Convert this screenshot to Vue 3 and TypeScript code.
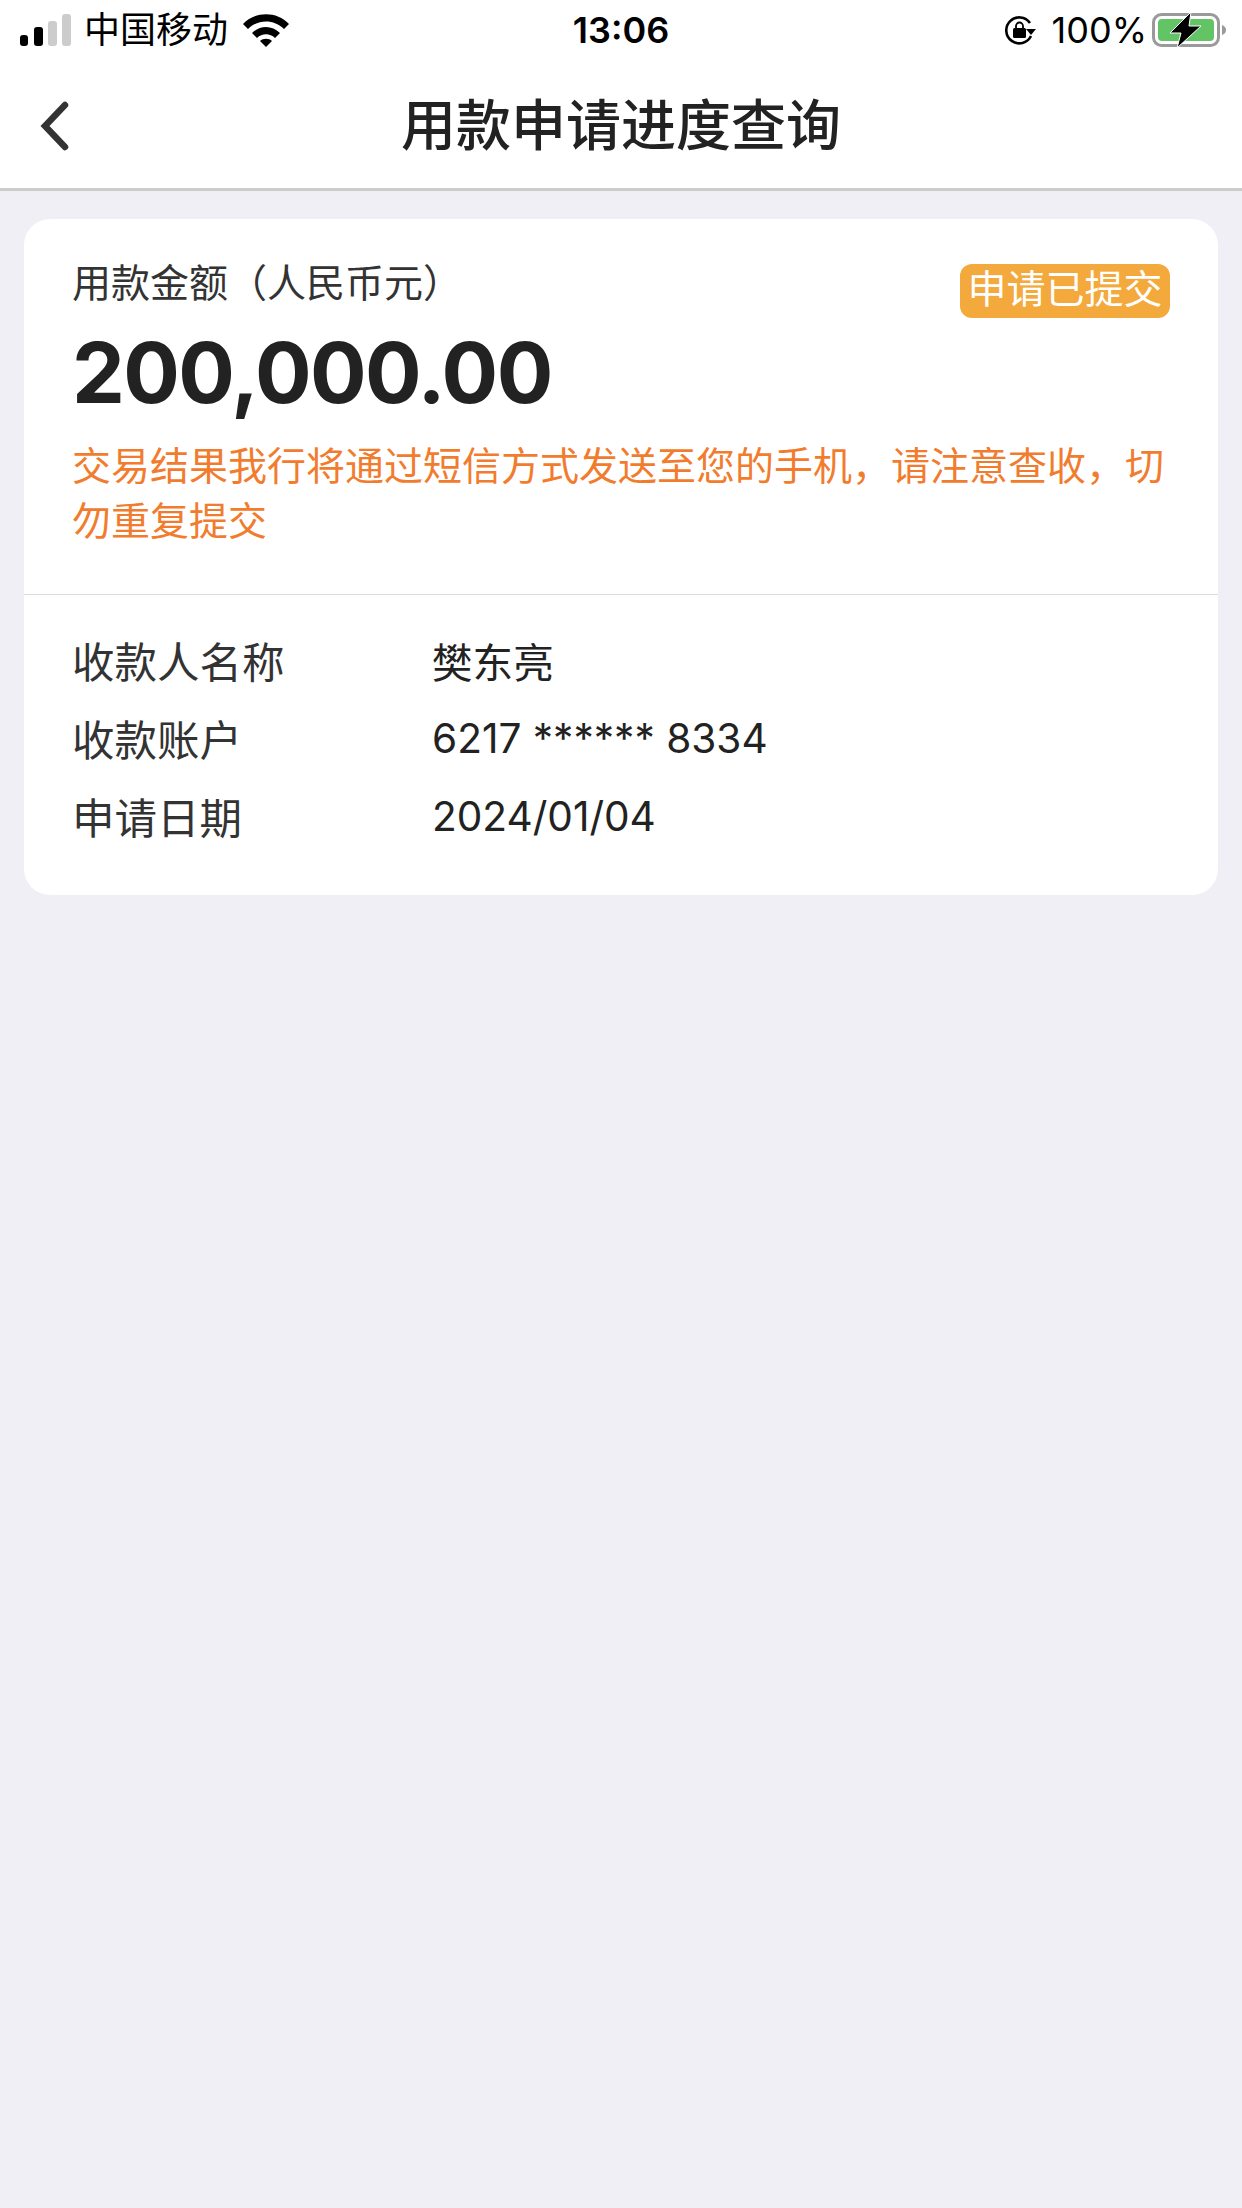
<script setup lang="ts">
const rows = [
  { label: "收款人名称", value: "樊东亮" },
  { label: "收款账户", value: "6217 ****** 8334" },
  { label: "申请日期", value: "2024/01/04" },
];
</script>

<template>
  <div class="page">
    <div class="status">
      <div class="status-left">
        <svg class="signal" width="52" height="34" viewBox="0 0 52 34">
          <rect x="0" y="22" width="8" height="11" rx="3" fill="#000" />
          <rect x="14" y="14" width="9" height="19" rx="3" fill="#000" />
          <rect x="28" y="8" width="9" height="25" rx="3" fill="#ccc" />
          <rect x="42" y="1" width="9" height="32" rx="3" fill="#ccc" />
        </svg>
        <span class="carrier">中国移动</span>
        <svg class="wifi" width="46" height="34" viewBox="0 0 46 34">
          <path d="M0 11C12 -2 34 -2 46 11L41 16C31 6 15 6 5 16Z" fill="#000" />
          <path d="M9 20C17 12 29 12 37 20L32 25C27 20 19 20 14 25Z" fill="#000" />
          <path d="M17 28C20 25 26 25 29 28L23 34Z" fill="#000" />
        </svg>
      </div>
      <div class="time">13:06</div>
      <div class="status-right">
        <svg class="lock" width="32" height="32" viewBox="0 0 32 32">
          <path d="M26 9A13 13 0 1 0 27 22" fill="none" stroke="#000" stroke-width="2.6" />
          <path d="M22 15L32 15L27 21Z" fill="#000" />
          <rect x="9" y="14" width="13" height="10" rx="1.5" fill="#000" />
          <path d="M12 14V12A3.5 3.5 0 0 1 19 12V14" fill="none" stroke="#000" stroke-width="1.8" />
        </svg>
        <span class="percent">100%</span>
        <svg class="battery" width="74" height="36" viewBox="0 0 74 36">
          <rect x="1.5" y="2.5" width="65" height="31" rx="8" fill="#fff" stroke="#9a9a9a" stroke-width="3" />
          <rect x="6" y="7" width="56" height="22" rx="4" fill="#63c466" />
          <path d="M70 13C73 14 74 16 74 18C74 20 73 22 70 23Z" fill="#9a9a9a" />
          <path d="M39 0L18 21H29L25 36L49 14H37Z" fill="#000" stroke="#fff" stroke-width="1" />
        </svg>
      </div>
    </div>

    <div class="nav">
      <svg class="back" width="32" height="50" viewBox="0 0 32 50">
        <path d="M25 4L5 25L25 46" fill="none" stroke="#333" stroke-width="6.5" stroke-linecap="round" stroke-linejoin="miter" />
      </svg>
      <div class="title">用款申请进度查询</div>
    </div>

    <div class="card">
      <div class="top">
        <div class="head">
          <div class="caption">用款金额（人民币元）</div>
          <div class="badge">申请已提交</div>
        </div>
        <div class="amount">200,000.00</div>
        <div class="notice">交易结果我行将通过短信方式发送至您的手机，请注意查收，切勿重复提交</div>
      </div>
      <div class="rows">
        <div v-for="row in rows" :key="row.label" class="row">
          <div class="label">{{ row.label }}</div>
          <div class="value">{{ row.value }}</div>
        </div>
      </div>
    </div>
  </div>
</template>

<style scoped>
.page {
  width: 1242px;
  height: 2208px;
  background: #efeff5;
  font-family: "Inter", "Noto Sans CJK SC", sans-serif;
  color: #222;
  overflow: hidden;
}
.status {
  height: 60px;
  background: #fff;
  display: flex;
  align-items: center;
  justify-content: space-between;
  padding: 0 16px 0 20px;
  color: #000;
  position: relative;
}
.status-left,
.status-right {
  display: flex;
  align-items: center;
}
.signal {
  margin-right: 12px;
}
.carrier {
  font-size: 36px;
  line-height: 60px;
  margin-right: 15px;
}
.time {
  position: absolute;
  left: 0;
  right: 0;
  text-align: center;
  font-size: 36px;
  font-weight: 600;
  line-height: 60px;
}
.lock {
  margin-right: 16px;
}
.percent {
  font-size: 36px;
  line-height: 60px;
  margin-right: 5px;
}
.nav {
  height: 128px;
  background: #fff;
  border-bottom: 3px solid #ccc;
  display: flex;
  align-items: center;
  justify-content: center;
  position: relative;
}
.back {
  position: absolute;
  left: 40px;
  top: 41px;
}
.title {
  font-size: 55px;
  font-weight: 500;
  color: #222;
  margin-bottom: 6px;
}
.card {
  margin: 28px 24px 0;
  background: #fff;
  border-radius: 26px;
  height: 676px;
}
.top {
  padding: 41px 48px 0;
  height: 376px;
  box-sizing: border-box;
  border-bottom: 1px solid #ddd;
}
.head {
  display: flex;
  justify-content: space-between;
  align-items: flex-start;
}
.caption {
  font-size: 39px;
  line-height: 46px;
  color: #333;
}
.badge {
  margin-top: 4px;
  height: 54px;
  line-height: 50px;
  width: 210px;
  text-align: center;
  background: #f4a93c;
  color: #fff;
  font-size: 39px;
  border-radius: 12px;
}
.amount {
  font-size: 84px;
  font-weight: 700;
  line-height: 100px;
  letter-spacing: -1.6px;
  margin-top: 5px;
  color: #222;
}
.notice {
  margin-top: 15px;
  font-size: 39px;
  line-height: 55px;
  color: #f27c2e;
}
.rows {
  padding: 25px 48px 0;
}
.row {
  display: flex;
  height: 78px;
  align-items: center;
  font-size: 42.5px;
  color: #333;
}
.label {
  width: 360px;
}
.value {
  font-size: 40.6px;
  margin-top: 2px;
  color: #222;
}
</style>
